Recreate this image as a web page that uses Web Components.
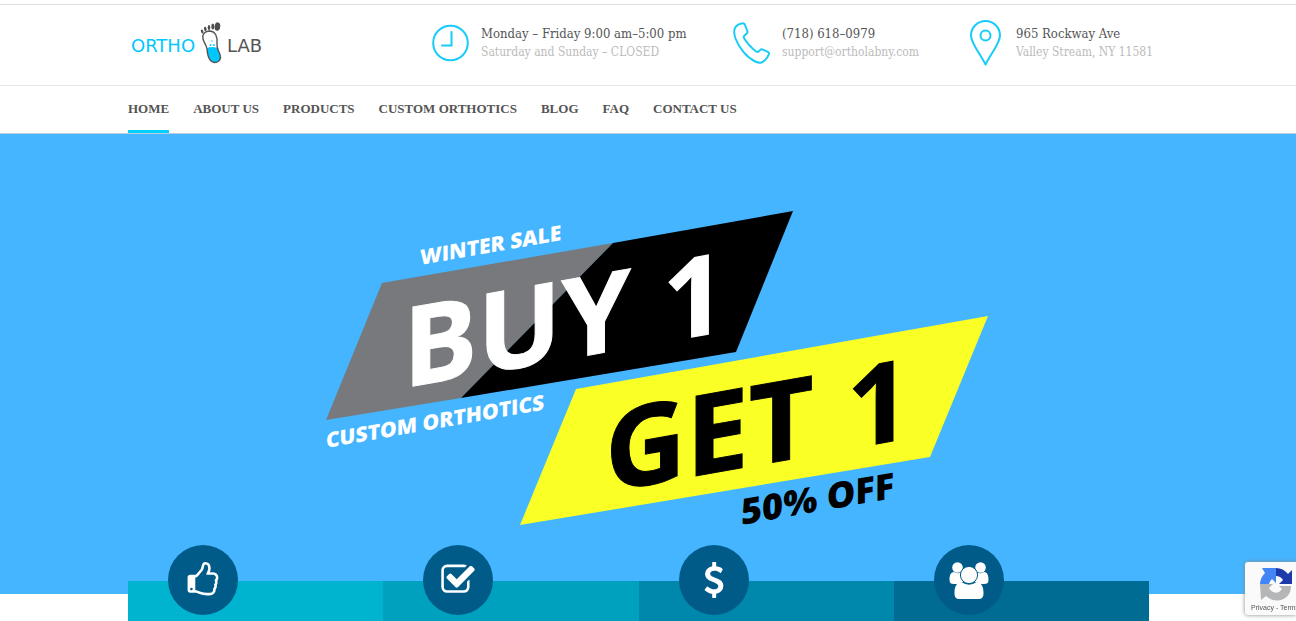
<!DOCTYPE html>
<html lang="en">
<head>
<meta charset="utf-8">
<meta name="viewport" content="width=device-width, initial-scale=1">
<title>Ortho Lab</title>
<style>
  body { margin: 0; background: #fff; color: #555; font-family: "DejaVu Serif Condensed", "DejaVu Serif", serif; overflow-x: hidden; }
  ortho-page { --edge-left: 128px; --edge-right: 147px; --accent: #00d0ff; }
</style>
</head>
<body>
<ortho-page></ortho-page>
<script>
const define = (name, html) => customElements.define(name, class extends HTMLElement {
  constructor() {
    super();
    this.attachShadow({ mode: "open" }).innerHTML = html;
  }
});

define("ortho-logo", `
<style>
  :host { display: block; }
  a { display: flex; align-items: center; gap: 4px; text-decoration: none; color: #555; font: 18px/20px "DejaVu Sans", sans-serif; }
  .o { color: #00c8ff; }
  svg { display: block; }
  span { padding-top: 6px; }
</style>
<a href="#"><span class="o">ORTHO</span>
<svg width="24" height="44" viewBox="0 0 24 44" aria-hidden="true">
  <g fill="#4d4d4d">
    <ellipse cx="18.500" cy="5.500" rx="2.800" ry="4.200" transform="rotate(8 18 5)"/>
    <ellipse cx="13.800" cy="5.500" rx="1.500" ry="2.900"/>
    <ellipse cx="10" cy="6.500" rx="1.300" ry="2.500"/>
    <ellipse cx="6.300" cy="8" rx="1.300" ry="2.300" transform="rotate(-10 6 8)"/>
    <ellipse cx="3" cy="10.500" rx="1.200" ry="2" transform="rotate(-18 3 10)"/>
  </g>
  <path d="M8 27q5-2 10.500 0c1 4 4 7 3 11-1 4-7 5-10 1-2.500-4-3-8-3.500-12z" fill="#00c8ff"/>
  <path d="M10 10c-5 .5-7 4-6 8 1 4 3.500 6 4 10 .5 7 2 13 7.500 13.500 5 0 7-4 5.500-8-1.500-4-3.500-6-3-11 .6-6-1-12.500-8-12.500z" fill="none" stroke="#555" stroke-width="1.400"/>
  <g fill="#00c8ff"><circle cx="13" cy="20" r=".7"/><circle cx="11.500" cy="24" r=".9"/><circle cx="15" cy="24" r=".9"/></g>
</svg><span>LAB</span></a>`);

define("contact-item", `
<style>
  :host { display: flex; align-items: center; gap: 12px; white-space: nowrap; }
  ::slotted(svg) { flex: none; }
  .main { font-size: 13px; line-height: 18px; color: #555; }
  .sub { font-size: 12px; line-height: 18px; color: #bbb; }
</style>
<slot name="icon"></slot>
<div><div class="main"><slot name="main"></slot></div><div class="sub"><slot name="sub"></slot></div></div>`);

define("site-header", `
<style>
  :host { display: block; border-bottom: 1px solid #e8e8e8; border-top: 1px solid #ddd; margin-top: 4px; }
  .row { display: flex; justify-content: space-between; align-items: center; height: 76px; padding: 0 var(--edge-right) 4px var(--edge-left); }
  ortho-logo { padding-left: 3px; }
  .contacts { display: grid; grid-template-columns: 301px 237px 179px; }
  svg { display: block; fill: none; stroke: #18ccf8; stroke-width: 2; stroke-linejoin: round; stroke-linecap: round; }
  a { color: inherit; text-decoration: none; }
</style>
<div class="row">
  <ortho-logo></ortho-logo>
  <div class="contacts">
    <contact-item>
      <svg slot="icon" width="37" height="38" viewBox="0 0 37 38"><circle cx="18.500" cy="19" r="17.300"/><path d="M19.500 8v13.500h-9.500" stroke-linejoin="miter"/></svg>
      <span slot="main">Monday – Friday 9:00 am–5:00 pm</span>
      <span slot="sub">Saturday and Sunday – CLOSED</span>
    </contact-item>
    <contact-item>
      <svg slot="icon" width="37" height="42" viewBox="0 0 37 42"><path d="M8.500 1.500c1.500-.6 2.700-.2 3.300 1l2.500 6.500c.5 1.200.1 2-.8 2.700l-2 1.800c-.9.900-.8 1.800-.4 2.700 3 5 7.500 9.700 12 13.300 1 .6 2 .4 2.700-.3l1.400-1.200c.8-.8 1.700-.9 2.700-.4l5 2.300c1.200.7 1.400 1.600.8 2.800-1.600 3.700-4.200 6.700-7.400 7.800-2 .5-4 0-6-1C14 35.500 6 26 2.500 16.500.8 11.500.5 8 2.500 5 4 3.200 6 2 8.500 1.500z"/></svg>
      <a slot="main" href="tel:7186180979">(718) 618–0979</a>
      <a slot="sub" href="mailto:support@ortholabny.com">support@ortholabny.com</a>
    </contact-item>
    <contact-item>
      <svg slot="icon" width="34" height="46" viewBox="0 0 34 46"><path d="M15.500 44.500C9 32 1 23 1 15.500a14.500 14.500 0 0 1 29 0C30 23 22 32 15.500 44.500z"/><circle cx="15.500" cy="15.500" r="5"/></svg>
      <span slot="main">965 Rockway Ave</span>
      <span slot="sub">Valley Stream, NY 11581</span>
    </contact-item>
  </div>
</div>`);

define("site-nav", `
<style>
  :host { display: block; padding: 0 var(--edge-right) 0 var(--edge-left); border-bottom: 1px solid #bcd; }
  nav { display: flex; gap: 24px; }
  a { display: block; padding: 14px 0 12px; border-bottom: 3px solid transparent; font: bold 13px/18px "Liberation Serif", serif; color: #555; text-decoration: none; white-space: nowrap; }
  a[aria-current] { border-color: var(--accent); }
</style>
<nav>
  <a href="#" aria-current="page">HOME</a><a href="#about">ABOUT US</a><a href="#products">PRODUCTS</a><a href="#custom">CUSTOM ORTHOTICS</a><a href="#blog">BLOG</a><a href="#faq">FAQ</a><a href="#contact">CONTACT US</a>
</nav>`);

define("sale-hero", `
<style>
  :host { display: block; background: #45b5ff; }
  svg { display: block; width: 100%; height: auto; font-family: "Open Sans", sans-serif; font-weight: 700; }
</style>
<svg viewBox="0 0 1296 460" role="group" aria-label="Winter sale">
  <path d="M382 149 613 109 461 264 326 286z" fill="#77797c"/>
  <path d="M613 109 793 77 736 218 461 264z" fill="#000"/>
  <path d="M576 255 988 182 930 323 520 391z" fill="#faff26"/>
  <g fill="#fff">
    <text font-size="21" font-weight="800" transform="translate(420 131) skewY(-10)">WINTER SALE</text>
    <text font-size="111" stroke="#fff" stroke-width="1" transform="translate(403 254) skewY(-10)">BUY <tspan dx="3">1</tspan></text>
    <text font-size="21" font-weight="800" transform="translate(326 314) skewY(-10)">CUSTOM ORTHOTICS</text>
  </g>
  <g fill="#000">
    <text font-size="112" stroke="#000" stroke-width="1" transform="translate(605 358) skewY(-10)">GET <tspan dx="4">1</tspan></text>
    <text font-size="36" font-weight="800" transform="translate(741 391) skewY(-10)">50% OFF</text>
  </g>
</svg>`);

define("feature-tile", `
<style>
  :host { display: block; height: 40px; padding-left: 40px; background: var(--tile); }
  div { display: flex; align-items: center; justify-content: center; width: 70px; height: 70px; margin-top: -36px; border-radius: 50%; background: #005b88; position: relative; }
</style>
<div><slot></slot></div>`);

define("feature-row", `
<style>
  :host { display: grid; grid-template-columns: repeat(4, 1fr); margin: -13px var(--edge-right) 0 var(--edge-left); position: relative; }
  svg { display: block; fill: #fff; }
</style>
<feature-tile style="--tile:#00b4d0"><svg width="36" height="36" viewBox="0 0 1792 1792"><path d="M384 1344q0-26-19-45t-45-19-45 19-19 45 19 45 45 19 45-19 19-45zm1152-576q0-51-39-89.500t-89-38.500h-352q0-58 48-159.500t48-160.500q0-98-32-145t-128-47q-26 26-38 85t-30.500 125.500-59.500 109.500q-22 23-77 91-4 5-23 30t-31.500 41-34.500 42.500-40 44-38.500 35.500-40 27-35.500 9h-32v640h32q13 0 31.500 3t33 6.500 38 11 35 11.500 35.500 12.500 29 10.500q211 73 342 73h121q192 0 192-167 0-26-5-56 30-16 47.500-52.500t17.500-73.500-18-69q53-50 53-119 0-25-10-55.500t-25-47.500q32-1 53.500-47t21.500-81zm128-1q0 89-49 163 9 33 9 69 0 77-38 144 3 21 3 43 0 101-60 178 1 139-85 219.500t-227 80.500h-129q-96 0-189.500-22.500t-216.500-65.500q-116-40-138-40h-288q-53 0-90.500-37.500t-37.500-90.500v-640q0-53 37.500-90.500t90.500-37.500h274q36-24 137-155 58-75 107-128 24-25 35.500-85.500t30.500-126.500 62-108q39-37 90-37 84 0 151 32.500t102 101.500 35 186q0 93-48 192h176q104 0 180 76t76 179z"/></svg></feature-tile>
<feature-tile style="--tile:#00a1bf"><svg width="36" height="36" viewBox="0 0 1792 1792"><path d="M1472 930v318q0 119-84.500 203.500t-203.500 84.500h-832q-119 0-203.500-84.500t-84.500-203.500v-832q0-119 84.500-203.500t203.500-84.500h832q63 0 117 25 15 7 18 23 3 17-9 29l-49 49q-10 10-23 10-3 0-9-2-23-6-45-6h-832q-66 0-113 47t-47 113v832q0 66 47 113t113 47h832q66 0 113-47t47-113v-254q0-13 9-22l64-64q10-10 23-10 6 0 12 3 20 8 20 29zm231-489l-814 814q-24 24-57 24t-57-24l-430-430q-24-24-24-57t24-57l110-110q24-24 57-24t57 24l263 263 647-647q24-24 57-24t57 24l110 110q24 24 24 57t-24 57z"/></svg></feature-tile>
<feature-tile style="--tile:#0087ac"><svg width="36" height="36" viewBox="0 0 1792 1792"><path d="M1362 1185q0 153-99.500 263.500t-258.500 136.500v175q0 14-9 23t-23 9h-135q-13 0-22.500-9.500t-9.500-22.500v-175q-66-9-127.500-31t-101.500-44.500-74-48-46.500-37.500-17.500-18q-17-21-2-41l103-135q7-10 23-12 15-2 24 9l2 2q113 99 243 125 37 8 74 8 81 0 142.500-43t61.500-122q0-28-15-53t-33.500-42-58.500-37.500-66-32-80-32.500q-39-16-61.500-25t-61.500-26.500-62.500-31-56.500-35.500-53.500-42.500-43.500-49-35.500-58-21-66.500-8.500-78q0-138 98-242t255-134v-180q0-13 9.500-22.500t22.500-9.500h135q14 0 23 9t9 23v176q57 6 110.500 23t87 33.500 63.500 37.500 39 29 15 14q17 18 5 38l-81 146q-8 15-23 16-14 3-27-7-3-3-14.500-12t-39-26.500-58.500-32-74.500-26-85.500-11.500q-95 0-155 43t-60 111q0 26 8.500 48t29.500 41.500 39.500 33 56 31 60.500 27 70 27.500q53 20 81 31.500t76 35 75.500 42.500 62 50 53 63.500 31.500 76.500 13 94z"/></svg></feature-tile>
<feature-tile style="--tile:#006c94"><svg width="40" height="37" viewBox="0 0 40 37"><circle cx="8.500" cy="5.500" r="5.300"/><circle cx="31.500" cy="5.500" r="5.300"/><path d="M5 10q3 2 7 .8c-.6 4 .5 7 3 9-3 .2-5 1-6.500 2.200H5c-3 0-4.500-1-4.500-4 0-4 .8-8 4.500-8zM35 10q-3 2-7 .8c.6 4-.5 7-3 9 3 .2 5 1 6.500 2.200H35c3 0 4.500-1 4.500-4 0-4-.8-8-4.500-8z"/><path d="M12.500 20q7.500 5.500 15 0c4.500 0 7 4 7 11 0 4-1.500 6-5 6h-19c-3.500 0-5-2-5-6 0-7 2.500-11 7-11z"/><circle cx="20" cy="13" r="8.600" stroke="#005b88"/></svg></feature-tile>`);

define("privacy-badge", `
<style>
  :host { display: block; position: fixed; right: 0; bottom: 6px; width: 51px; height: 53px; overflow: hidden; background: #fafafa; border-radius: 3px 0 0 3px; box-shadow: 0 0 4px #888; }
  svg { display: block; margin: 5px 0 1px 14px; }
  a { display: block; padding-left: 6px; font: 7px/12px "Liberation Sans", sans-serif; color: #555; text-decoration: none; white-space: nowrap; }
</style>
<svg width="34" height="34" viewBox="0 0 34 34" aria-hidden="true">
  <path d="M17 1a16 16 0 0 1 12 6l4-4v14H20l4-4a9 9 0 0 0-7-4z" fill="#1c3aa9"/>
  <path d="M1 17A16 16 0 0 1 6 6L3 1h14v15l-4-4a9 9 0 0 0-3 5z" fill="#4285f4"/>
  <path d="M1 17h13l-4 4c3 6 10 6 13 1l-3-3h12c0 14-15 19-25 10l-5 4z" fill="#b4b6b8"/>
</svg>
<a href="#privacy">Privacy - Terms</a>`);

define("ortho-page", `
<style>:host { display: flow-root; }</style>
<site-header></site-header>
<site-nav></site-nav>
<main><sale-hero></sale-hero><feature-row></feature-row></main>
<privacy-badge></privacy-badge>`);
</script>
</body>
</html>
